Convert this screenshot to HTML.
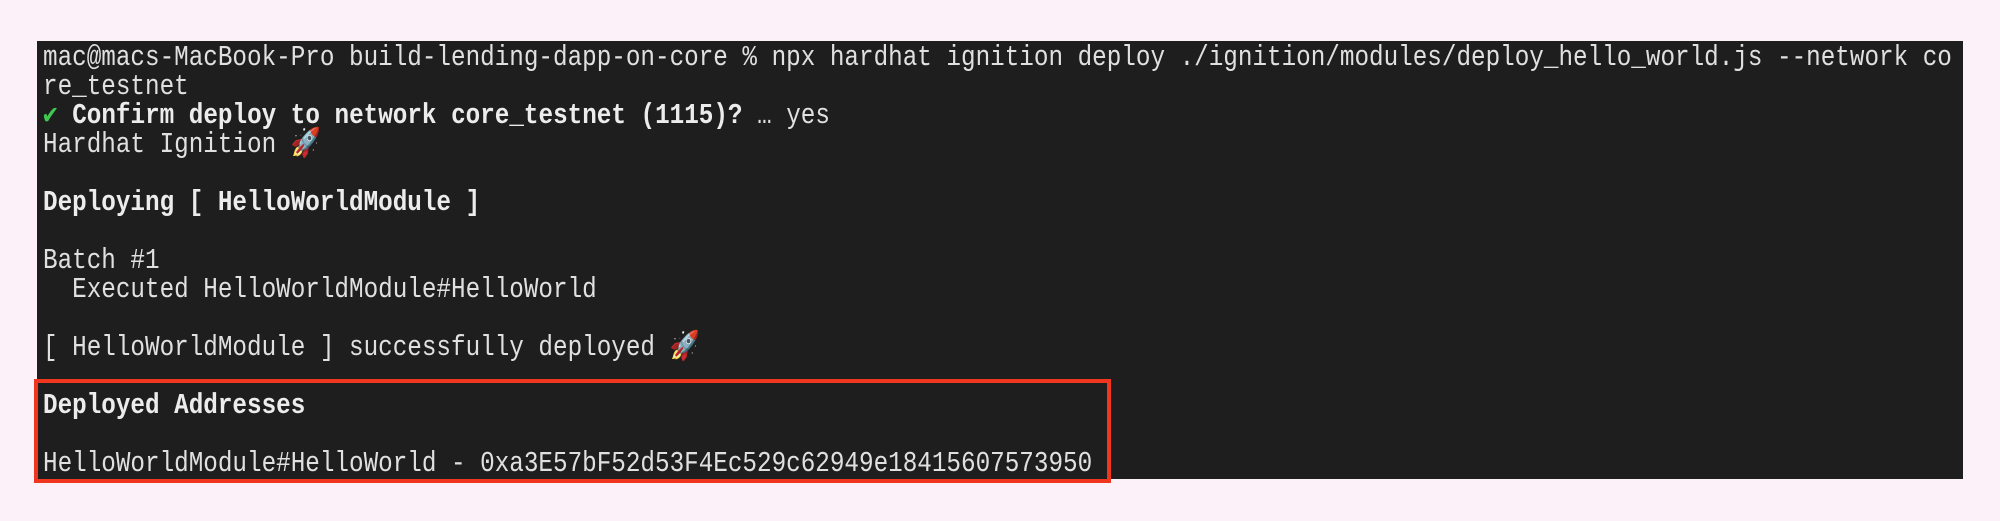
<!DOCTYPE html>
<html><head><meta charset="utf-8"><style>
html,body{margin:0;padding:0;width:2000px;height:521px;background:#fcf0f9;overflow:hidden;position:relative}
.term{position:absolute;left:37px;top:41px;width:1926px;height:438px;background:#1e1e1e}
pre{position:absolute;left:43px;top:43px;margin:0;font-family:"Liberation Mono","DejaVu Sans Mono",monospace;font-size:28.5px;line-height:29px;color:#e0e0e0;white-space:pre;transform:scaleX(0.852);transform-origin:0 0}
b{font-weight:bold;color:#ececec}
.g{color:#3fc950}
.red{position:absolute;left:34px;top:379px;width:1069px;height:96px;border:4px solid #f0361e}
</style></head><body>
<div class="term"></div>
<div class="red"></div>
<pre>mac@macs-MacBook-Pro build-lending-dapp-on-core % npx hardhat ignition deploy ./ignition/modules/deploy_hello_world.js --network co
re_testnet
<span class="g">✔</span> <b>Confirm deploy to network core_testnet (1115)?</b> … yes
Hardhat Ignition 🚀

<b>Deploying [ HelloWorldModule ]</b>

Batch #1
  Executed HelloWorldModule#HelloWorld

[ HelloWorldModule ] successfully deployed 🚀

<b>Deployed Addresses</b>

HelloWorldModule#HelloWorld - 0xa3E57bF52d53F4Ec529c62949e18415607573950</pre>
</body></html>
